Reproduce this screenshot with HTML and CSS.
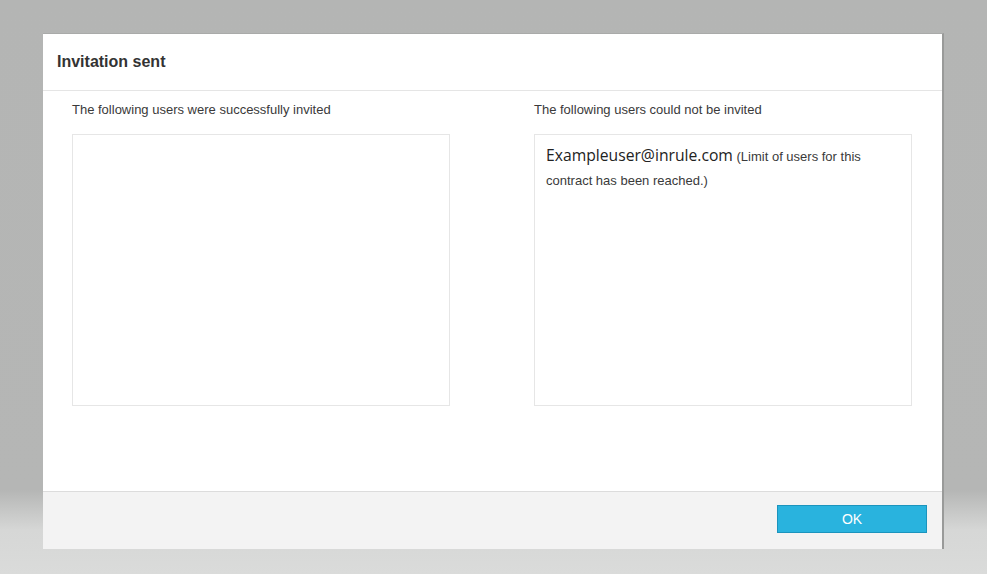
FILE: index.html
```html
<!DOCTYPE html>
<html>
<head>
<meta charset="utf-8">
<link rel="stylesheet" href="styles.css">
</head>
<body>
<div class="backdrop">
  <div class="dialog">
    <div class="dialog-header">
      <h1 class="dialog-title">Invitation sent</h1>
    </div>
    <div class="dialog-body">
      <div class="column">
        <div class="column-label">The following users were successfully invited</div>
        <div class="list-box"></div>
      </div>
      <div class="column">
        <div class="column-label">The following users could not be invited</div>
        <div class="list-box">
          <p class="failed-item"><span class="email">Exampleuser@inrule.com</span> (Limit of users for this contract has been reached.)</p>
        </div>
      </div>
    </div>
    <div class="dialog-footer">
      <button class="btn-ok">OK</button>
    </div>
  </div>
</div>
</body>
</html>
```

FILE: styles.css
```css
html, body {
  margin: 0;
  padding: 0;
  height: 100%;
}
body {
  font-family: "Liberation Sans", Arial, sans-serif;
  background: linear-gradient(to bottom, #b4b5b4 0px, #b5b6b5 490px, #d6d7d6 530px, #dadbda 574px);
  overflow: hidden;
}
.backdrop {
  padding: 33px 0 0 43px;
}
.dialog {
  width: 901px;
  height: 516px;
  background: #fff;
  border-top: 1px solid #a9aaa9;
  border-right: 2px solid #999a99;
  display: flex;
  flex-direction: column;
  box-sizing: border-box;
}
.dialog-header {
  height: 57px;
  flex: none;
  border-bottom: 1px solid #e5e5e5;
  display: flex;
  align-items: center;
  padding-left: 14px;
  box-sizing: border-box;
}
.dialog-title {
  margin: 0;
  font-size: 16px;
  font-weight: bold;
  color: #333;
}
.dialog-body {
  flex: 1;
  display: flex;
  gap: 84px;
  padding: 11px 0 0 29px;
}
.column {
  width: 378px;
  display: flex;
  flex-direction: column;
}
.column-label {
  font-size: 13px;
  color: #3a3a3a;
  height: 32px;
}
.list-box {
  height: 272px;
  border: 1px solid #e6e6e6;
  box-sizing: border-box;
  padding: 8px 10px 8px 11px;
}
.failed-item {
  margin: 0;
  font-size: 13px;
  color: #3a3a3a;
  line-height: 24px;
}
.email {
  font-family: "Open Sans", "Noto Sans", sans-serif;
  font-size: 15.7px;
  color: #222;
}
.dialog-footer {
  height: 58px;
  flex: none;
  background: #f3f3f3;
  border-top: 1px solid #dcdcdc;
  display: flex;
  align-items: center;
  justify-content: flex-end;
  padding-right: 15px;
  box-sizing: border-box;
}
.btn-ok {
  width: 150px;
  height: 28px;
  background: #29b3de;
  border: 1px solid #1b94bd;
  color: #fff;
  font-family: "Liberation Sans", Arial, sans-serif;
  font-size: 14px;
  font-weight: normal;
  padding: 0;
  margin-top: -3px;
}
```
